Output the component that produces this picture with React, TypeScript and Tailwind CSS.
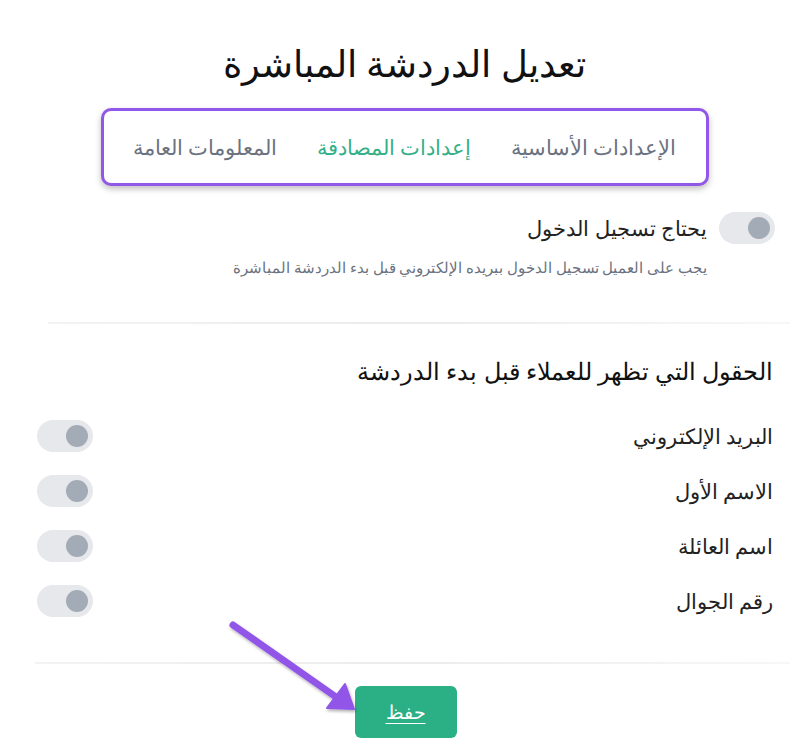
import React from "react";

const tabs = [
  { label: "الإعدادات الأساسية", active: false },
  { label: "إعدادات المصادقة", active: true },
  { label: "المعلومات العامة", active: false },
];

const fields = ["البريد الإلكتروني", "الاسم الأول", "اسم العائلة", "رقم الجوال"];

/** Interrupteur désactivé (piste grise, pastille à droite). */
function Toggle() {
  return (
    <div
      dir="ltr"
      className="flex h-[32px] w-[56px] shrink-0 items-center justify-end rounded-full bg-[#e6e8ec] pr-[5px]"
    >
      <div className="h-[22px] w-[22px] rounded-full bg-[#a3abb6]" />
    </div>
  );
}

function Divider() {
  return <div className="h-[2px] bg-gradient-to-l from-[#f7f7f7] via-[#ececec] to-[#f3f3f3]" />;
}

export default function App() {
  return (
    <div
      dir="rtl"
      className="relative h-[743px] w-[809px] overflow-hidden bg-white"
      style={{ fontFamily: '"Noto Sans", "Open Sans", sans-serif' }}
    >
      <h1 className="pt-[38px] text-center text-[36.8px] leading-[50px] font-normal text-[#111]">
        تعديل الدردشة المباشرة
      </h1>

      {/* Onglets */}
      <div className="mx-auto mt-[20px] flex h-[78px] w-[608px] items-center justify-between rounded-[10px] border-[3px] border-[#9157e8] bg-white px-[29px] shadow-[0_3px_6px_rgba(0,0,0,0.25)]">
        {tabs.map((t) => (
          <span
            key={t.label}
            className={
              t.active
                ? "text-[21px] leading-[28px] text-[#35b089]"
                : "text-[21px] leading-[28px] text-[#6b7280]"
            }
          >
            {t.label}
          </span>
        ))}
      </div>

      <div className="pr-[34px] pl-[35px]">
        {/* Connexion requise */}
        <div className="mt-[26px] flex items-center gap-[12px]">
          <Toggle />
          <span className="text-[20.6px] leading-[28px] text-[#222]">يحتاج تسجيل الدخول</span>
        </div>
        <p className="mt-[12px] pr-[68px] text-[14.5px] leading-[22px] text-[#6b7280]">
          يجب على العميل تسجيل الدخول ببريده الإلكتروني قبل بدء الدردشة المباشرة
        </p>
      </div>

      <div className="mt-[44px] pr-[19px] pl-[48px]">
        <Divider />
      </div>

      <div className="pr-[36px] pl-[37px]">
        <h2 className="mt-[32px] text-[23.5px] leading-[30px] text-[#111]">
          الحقول التي تظهر للعملاء قبل بدء الدردشة
        </h2>

        <div className="mt-[34px] flex flex-col gap-[23px]">
          {fields.map((f) => (
            <div key={f} className="flex items-center justify-between">
              <span className="text-[20.6px] leading-[28px] text-[#222]">{f}</span>
              <Toggle />
            </div>
          ))}
        </div>
      </div>

      <div className="mt-[45px] pr-[19px] pl-[35px]">
        <Divider />
      </div>

      <div className="mt-[22px] flex justify-center">
        <button
          type="button"
          className="ml-[2px] h-[52px] w-[102px] rounded-[6px] bg-[#2bb086] text-[19px] text-white underline underline-offset-4"
        >
          حفظ
        </button>
      </div>

      {/* Flèche d'annotation */}
      <svg
        className="pointer-events-none absolute top-0 left-0"
        width="809"
        height="743"
        viewBox="0 0 809 743"
      >
        <defs>
          <filter id="sh" x="-20%" y="-20%" width="140%" height="140%">
            <feDropShadow dx="1" dy="2" stdDeviation="1.5" floodColor="#000" floodOpacity="0.3" />
          </filter>
        </defs>
        <g filter="url(#sh)" fill="#9157e8" stroke="#9157e8">
          <line x1="233" y1="625" x2="336" y2="697" strokeWidth="7" strokeLinecap="round" />
          <polygon points="354,709 327,708 345,684" strokeWidth="2" strokeLinejoin="round" />
        </g>
      </svg>
    </div>
  );
}
